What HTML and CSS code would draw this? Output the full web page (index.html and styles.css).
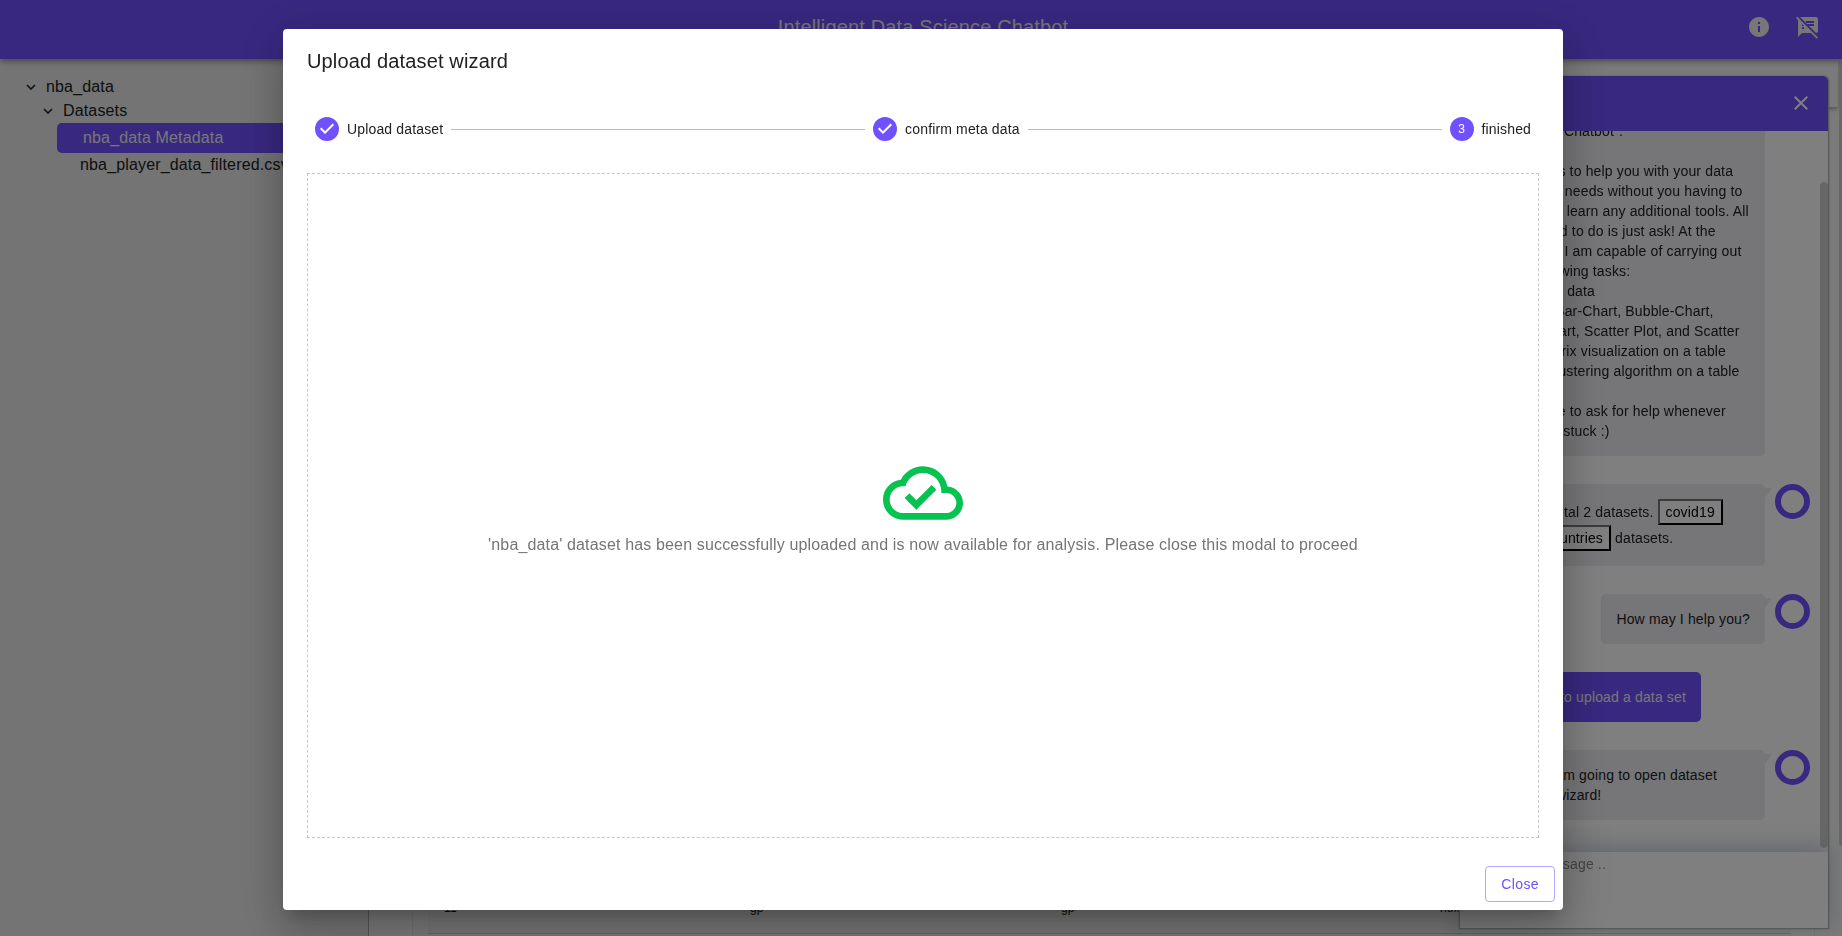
FILE: index.html
```html
<!DOCTYPE html>
<html lang="en">
<head>
<meta charset="utf-8">
<title>Intelligent Data Science Chatbot</title>
<link rel="stylesheet" href="styles.css">
</head>
<body>
<div class="app">
  <header class="topbar">
    <h1 class="topbar-title">Intelligent Data Science Chatbot</h1>
    <div class="topbar-actions">
      <svg class="icon" viewBox="0 0 24 24"><path d="M12 2C6.48 2 2 6.48 2 12s4.48 10 10 10 10-4.480 10-10S17.520 2 12 2zm1 15h-2v-6h2v6zm0-8h-2V7h2v2z"/></svg>
      <svg class="icon" viewBox="0 0 24 24"><path d="M10.540 11l-.54-.54L7.540 8 6 6.460 2.380 2.840 1.270 1.730 0 3l2.010 2.010L2 22l4-4h9l5.730 5.730L22 22.460 17.540 18l-7-7zM8 14H6v-2h2v2zm-2-3V9l2 2H6zm14-9H4.080L10 7.920V6h8v2h-7.920l1 1H18v2h-4.920l6.990 6.990C21.140 17.950 22 17.080 22 16V4c0-1.100-.9-2-2-2z"/></svg>
    </div>
  </header>
  <div class="workspace">
    <nav class="sidebar">
      <div class="tree-item level-1"><svg class="chevron" viewBox="0 0 10 6"><path d="M1 1l4 4 4-4"/></svg>nba_data</div>
      <div class="tree-item level-2"><svg class="chevron" viewBox="0 0 10 6"><path d="M1 1l4 4 4-4"/></svg>Datasets</div>
      <div class="tree-item selected">nba_data Metadata</div>
      <div class="tree-item leaf">nba_player_data_filtered.csv</div>
    </nav>
    <main class="content">
      <div class="tabstrip"></div>
      <div class="sheet">
        <div class="table">
          <div class="table-row"><span>11</span><span>gp</span><span>gp</span><span>null</span></div>
        </div>
      </div>
      <div class="page-thumb"></div>
    </main>
  </div>
</div>

<section class="chat">
  <header class="chat-header">
    <svg class="icon" viewBox="0 0 24 24"><path d="M19 6.410L17.590 5 12 10.590 6.410 5 5 6.410 10.590 12 5 17.590 6.410 19 12 13.410 17.590 19 19 17.590 13.410 12z"/></svg>
  </header>
  <div class="chat-messages">
    <div class="message bot">
      <div class="bubble wide">Hello! I am "Intelligent Data<br>Science Chatbot".<br><br>My job is to help you with your data<br>analysis needs without you having to<br>install or learn any additional tools. All<br>you need to do is just ask! At the<br>moment I am capable of carrying out<br>the following tasks:<br>- Upload data<br>- Draw Bar-Chart, Bubble-Chart,<br>Line-Chart, Scatter Plot, and Scatter<br>Plot Matrix visualization on a table<br>- Run clustering algorithm on a table<br><br>Feel free to ask for help whenever<br>you feel stuck :)</div>
      <span class="avatar"></span>
    </div>
    <div class="message bot">
      <div class="bubble wide tall">I have total 2 datasets. <button class="chip">covid19</button><br>and <button class="chip">countries</button> datasets.</div>
      <span class="avatar"></span>
    </div>
    <div class="message bot"><div class="bubble">How may I help you?</div><span class="avatar"></span></div>
    <div class="message user"><div class="bubble">I want to upload a data set</div></div>
    <div class="message bot">
      <div class="bubble wide">Sure! I am going to open dataset<br>upload wizard!</div>
      <span class="avatar"></span>
    </div>
    <div class="chat-thumb"></div>
  </div>
  <footer class="chat-input">Type a message ..</footer>
</section>

<div class="backdrop">
  <div class="modal">
    <h2 class="modal-title">Upload dataset wizard</h2>
    <div class="modal-content">
      <div class="stepper">
        <div class="step"><svg class="step-check" viewBox="0 0 24 24"><path d="M12 0a12 12 0 1 0 0 24 12 12 0 0 0 0-24zm-2 17l-5-5 1.400-1.400 3.600 3.600 7.600-7.600L19 8l-9 9z"/></svg>Upload dataset</div>
        <div class="step-line"></div>
        <div class="step"><svg class="step-check" viewBox="0 0 24 24"><path d="M12 0a12 12 0 1 0 0 24 12 12 0 0 0 0-24zm-2 17l-5-5 1.400-1.400 3.600 3.600 7.600-7.600L19 8l-9 9z"/></svg>confirm meta data</div>
        <div class="step-line"></div>
        <div class="step"><span class="step-icon">3</span>finished</div>
      </div>
      <div class="result">
        <svg class="cloud" viewBox="0 0 24 24"><path d="M19.350 10.040C18.670 6.590 15.640 4 12 4 9.110 4 6.600 5.640 5.350 8.040 2.340 8.360 0 10.910 0 14c0 3.310 2.690 6 6 6h13c2.760 0 5-2.240 5-5 0-2.640-2.050-4.780-4.650-4.960zM19 18H6c-2.210 0-4-1.790-4-4s1.790-4 4-4h.71C7.370 7.690 9.480 6 12 6c3.040 0 5.500 2.460 5.500 5.500v.5H19c1.660 0 3 1.340 3 3s-1.340 3-3 3zm-9-3.820l-2.090-2.090L6.500 13.500 10 17l6.010-6.010-1.410-1.410z"/></svg>
        <p class="result-text">'nba_data' dataset has been successfully uploaded and is now available for analysis. Please close this modal to proceed</p>
      </div>
    </div>
    <div class="modal-actions"><button class="close-button">Close</button></div>
  </div>
</div>
</body>
</html>
```

FILE: styles.css
```css
:root { --primary: #7050ff; }

* { box-sizing: border-box; }

body {
  margin: 0;
  height: 936px;
  overflow: hidden;
  font-family: "Liberation Sans", Arial, sans-serif;
  font-size: 14px;
  line-height: 20px;
  letter-spacing: 0.15px;
  color: #212121;
  background: #f4f4f4;
}

h1, h2, p { margin: 0; font-weight: 400; }

.icon { display: block; width: 24px; height: 24px; fill: currentColor; }

.app { display: flex; flex-direction: column; height: 936px; }

.topbar {
  position: relative;
  z-index: 1;
  flex: none;
  display: grid;
  grid-template-columns: 1fr auto 1fr;
  align-items: center;
  height: 59px;
  padding: 0 22px 5px 26px;
  color: #eee;
  background: var(--primary);
  box-shadow: 0 2px 4px -1px rgba(0,0,0,.2), 0 4px 5px rgba(0,0,0,.14), 0 1px 10px rgba(0,0,0,.12);
}
.topbar-title { grid-column: 2; font-size: 20px; line-height: 32px; }
.topbar-actions { display: flex; justify-content: flex-end; gap: 25px; }

.workspace { flex: 1; display: flex; min-height: 0; }

.sidebar {
  flex: none;
  width: 369px;
  padding: 16px 10px 0 26px;
  border-right: 1px solid #aaa;
  background: #e8e8e8;
}
.tree-item {
  display: flex;
  align-items: center;
  height: 24px;
  font-size: 16px;
  white-space: nowrap;
}
.level-2 { padding-left: 17px; }
.chevron { width: 10px; height: 6px; margin-right: 10px; fill: none; stroke: currentColor; stroke-width: 1.6; }
.selected {
  height: 30px;
  margin-left: 31px;
  padding-left: 26px;
  border-radius: 5px;
  color: #eee;
  background: var(--primary);
}
.leaf { padding-left: 54px; }

.content { flex: 1; position: relative; display: flex; flex-direction: column; }
.tabstrip { height: 48px; margin-right: 4px; background: #f5f5f5; box-shadow: 0 2px 4px rgba(0,0,0,.3); }
.sheet {
  flex: 1;
  margin: 0 27px 0 43px;
  padding: 0 23px 2px 15px;
  border: solid #e4e4e4;
  border-width: 0 1px;
}
.table { display: flex; flex-direction: column; justify-content: flex-end; height: 100%; border-bottom: 1px solid #ccc; background: #ededed; }
.table-row { display: grid; grid-template-columns: 306px 311px 379px 1fr; padding: 0 0 15px 16px; font-size: 12px; color: #111; }
.page-thumb { position: absolute; top: 0; right: 0; width: 3px; height: 787px; border-radius: 3px 0 0 3px; background: #cfcfcf; }

.chat {
  position: fixed;
  z-index: 2;
  top: 76px;
  left: 1459px;
  display: flex;
  flex-direction: column;
  width: 370px;
  height: 853px;
  border: solid #b4b4b4;
  border-width: 0 1px 1px;
  border-radius: 5px 5px 0 0;
  background: #fff;
  box-shadow: 0 0 2px rgba(0,0,0,.3);
}
.chat-header {
  flex: none;
  display: flex;
  align-items: center;
  justify-content: flex-end;
  height: 55px;
  padding: 0 15px 1px 0;
  border-radius: 5px 5px 0 0;
  color: #fff;
  background: var(--primary);
}
.chat-messages {
  position: relative;
  flex: none;
  display: flex;
  flex-direction: column;
  justify-content: flex-end;
  gap: 28px;
  height: 721px;
  padding: 0 18px 32px;
  overflow: hidden;
}
.message { display: flex; justify-content: flex-end; align-items: flex-start; gap: 10px; }
.bubble { position: relative; padding: 15px; border-radius: 5px; background: #ececf0; white-space: nowrap; }
.bot .bubble::after {
  content: "";
  position: absolute;
  top: 4px;
  right: -7px;
  border-top: 10px solid #ececf0;
  border-right: 7px solid transparent;
}
.wide { width: 271px; }
.tall { line-height: 26px; }
.user { padding-right: 109px; }
.user .bubble { margin-right: 0; color: #eee; background: var(--primary); }
.avatar { flex: none; width: 35px; height: 35px; border: 6px solid var(--primary); border-radius: 50%; }
.chip {
  height: 26px;
  padding: 1px 6px;
  border: 2px outset #222;
  font: inherit;
  line-height: 20px;
  letter-spacing: inherit;
  color: #000;
  background: #fff;
  vertical-align: top;
}
.chat-thumb { position: absolute; top: 51px; right: 0; width: 8px; height: 666px; border-radius: 4px; background: #cfcfcf; }
.chat-input {
  position: relative;
  flex: 1;
  padding: 2px 29px;
  color: #888;
  background: #fff;
  box-shadow: 0 -5px 20px rgba(150,165,190,.54);
}

.backdrop {
  position: fixed;
  z-index: 3;
  inset: 0;
  display: flex;
  justify-content: center;
  padding: 29px 0 26px;
  background: rgba(0,0,0,.5);
}
.modal {
  display: flex;
  flex-direction: column;
  width: 1280px;
  margin-left: 4px;
  border-radius: 4px;
  background: #fff;
  box-shadow: 0 11px 15px -7px rgba(0,0,0,.2), 0 24px 38px 3px rgba(0,0,0,.14), 0 9px 46px 8px rgba(0,0,0,.12);
}
.modal-title { padding: 16px 24px; font-size: 20px; line-height: 32px; }
.modal-content { flex: 1; display: flex; flex-direction: column; padding: 0 24px 20px; }
.stepper { display: flex; align-items: center; padding: 24px 0 32px; }
.step { display: flex; align-items: center; padding: 0 8px; }
.step-check { width: 24px; height: 24px; margin-right: 8px; fill: var(--primary); }
.step-icon {
  display: flex;
  align-items: center;
  justify-content: center;
  width: 24px;
  height: 24px;
  margin-right: 8px;
  border-radius: 50%;
  font-size: 12px;
  color: #fff;
  background: var(--primary);
}
.step-line { flex: 1; border-top: 1px solid #bdbdbd; }
.result {
  flex: 1;
  display: flex;
  flex-direction: column;
  align-items: center;
  justify-content: center;
  padding-bottom: 2px;
  border: 1px dashed #c8c8c8;
}
.cloud { width: 80px; height: 80px; fill: #06c250; }
.result-text { font-size: 16px; line-height: 24px; color: #757575; }
.modal-actions { display: flex; justify-content: flex-end; padding: 8px; }
.close-button {
  height: 36px;
  padding: 0 15px;
  border: 1px solid #aeaaff;
  border-radius: 4px;
  font: inherit;
  letter-spacing: 0.4px;
  color: var(--primary);
  background: #fff;
}
```
